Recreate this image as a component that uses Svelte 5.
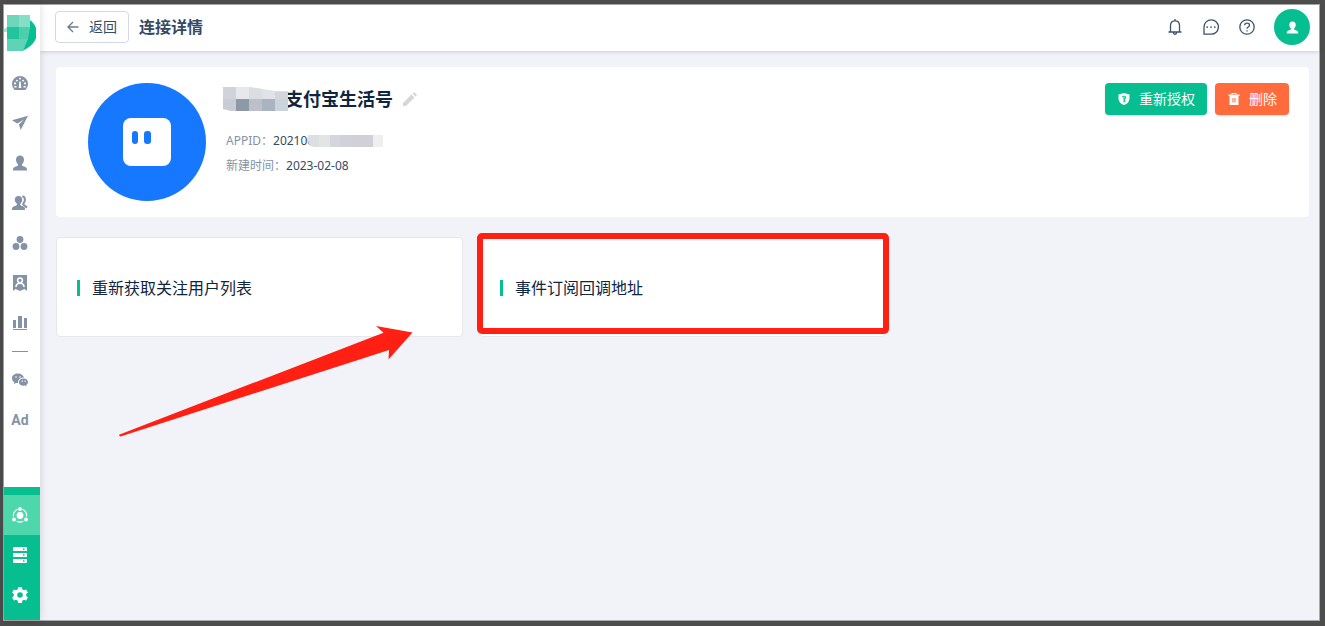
<script>
  const navItems = [
    { id: 'dashboard', label: '概览' },
    { id: 'send', label: '推送' },
    { id: 'user', label: '用户' },
    { id: 'group', label: '群组' },
    { id: 'nodes', label: '标签' },
    { id: 'badge', label: '名片' },
    { id: 'chart', label: '报表' }
  ];
  const channels = [{ id: 'wechat', label: '微信' }];
  const system = [
    { id: 'connect', label: '连接', active: true },
    { id: 'server', label: '数据' },
    { id: 'gear', label: '设置' }
  ];

  const nameMask = ['#d0d3db', '#e7e8ec', '#dadde2', '#dfe2e7', '#d3d7dc', '#c9ccd6', '#8e99a8', '#bcc0cb', '#a9b4c0', '#cbd3dc'];
  const idMask = ['#dcdfe1', '#e3e4e4', '#d3d6da', '#d0d1da', '#d1d0d6', '#d1d0d6', '#efeff0'];
</script>

{#snippet icon(id)}
  <svg class="icon" viewBox="0 0 16 16" aria-hidden="true">
    {#if id === 'dashboard'}
      <path fill-rule="evenodd" d="M2.2 14.5A8 8 0 1 1 13.8 14.5Q13.4 15 12.8 15H3.2Q2.6 15 2.2 14.500ZM7.300 6.500L6.700 13H9.300L8.700 6.500ZM2 9.300h2v-1.700h-2ZM12 9.300h2v-1.700h-2ZM3.700 5.800l1.300 1 1.100-1.400-1.300-1ZM11 6.800l1.300-1-1.100-1.400-1.300 1ZM7.200 4.500h1.600v-1.700H7.200ZM2.300 12.500h2.200v-1.400H2.300ZM11.500 12.500h2.200v-1.400h-2.200Z" />
    {:else if id === 'send'}
      <path d="M0 5.200 16 .7 8.700 15 6.900 9.600 12 4.600 5.300 8.600Z" />
    {:else if id === 'user'}
      <path d="M8 .5C10.500 .5 12 2.300 12 4.700 12 6.500 11.200 8.300 10 9.100V10.500C11 11.500 15 11.500 15 14.500V15.500H1V14.500C1 11.500 5 11.500 6 10.500V9.100C4.800 8.300 4 6.500 4 4.700 4 2.300 5.500 .5 8 .5Z" />
    {:else if id === 'group'}
      <path d="M6.500 1C9 1 10.200 2.700 10.200 4.800 10.200 6.500 9.400 8 8.300 8.800V10C9.300 11 13 11.200 13 14V15H0V14C0 11.200 4 11 5 10V8.800C3.800 8 2.800 6.500 2.800 4.800 2.800 2.700 4 1 6.500 1Z" />
      <path class="line" d="M10.400 1.300C13.600 2 13.600 6.700 11.300 8.600V9.600L15 12.600" />
    {:else if id === 'nodes'}
      <circle cx="8" cy="4.500" r="3.400" /><circle cx="4" cy="11.500" r="3.400" /><circle cx="12" cy="11.500" r="3.400" />
    {:else if id === 'badge'}
      <path d="M1 0H15V16L12.500 14 8 16 3.500 14 1 16Z" />
      <g class="cut"><circle cx="8" cy="5.300" r="2.400" /><path d="M4 12C4 7 12 7 12 12" /></g>
    {:else if id === 'chart'}
      <path d="M1 5h3v8H1ZM6 1h4v12H6ZM12 3h3v10h-3ZM1 14h14v1H1Z" />
    {:else if id === 'wechat'}
      <path d="M6 1.500C2.500 1.500 0 3.500 0 6.300 0 8 .9 9.300 2.300 10.200L1.800 12 4 10.900 6 11.100C5.800 7.800 8.300 5.600 12 5.600 11.400 3.200 9 1.500 6 1.500Z" />
      <path d="M11.500 6.500C8.800 6.500 6.900 8 6.900 10.200 6.900 12.300 8.900 13.700 11.500 13.700L12.900 13.500 14.600 14.300 14.200 12.900C15.300 12.200 16 11.300 16 10.200 16 8 14.100 6.500 11.500 6.500Z" />
      <g class="dot"><circle cx="4" cy="5" r=".8" /><circle cx="8" cy="5" r=".8" /><circle cx="10.200" cy="9.200" r=".7" /><circle cx="13.200" cy="9.200" r=".7" /></g>
    {:else if id === 'connect'}
      <circle cx="8" cy="8.500" r="3.400" />
      <path class="line thin" d="M5.500 2.200A7 7 0 0 0 1.500 9.500M10.500 2.200A7 7 0 0 1 14.500 9.500M4.700 14.200A7 7 0 0 0 11.300 14.200" />
      <circle cx="8" cy="2" r="1.900" /><circle cx="2" cy="12.500" r="1.900" /><circle cx="14" cy="12.500" r="1.900" />
    {:else if id === 'server'}
      <path fill-rule="evenodd" d="M2 0H14Q15 0 15 1V4H1V1Q1 0 2 0ZM11 1.500V3H12.500V1.500ZM1 6H15V10H1ZM11 7.300V8.700H12.500V7.300ZM1 12H15V15Q15 16 14 16H2Q1 16 1 15ZM11 13.300V14.700H12.500V13.300Z" />
    {:else if id === 'gear'}
      <path fill-rule="evenodd" d="M6.200 0H9.800L10.300 2.300 11.800 3.200 14.100 2.500 15.900 5.500 14.200 7.100V8.900L15.900 10.500 14.100 13.500 11.800 12.800 10.300 13.700 9.800 16H6.200L5.700 13.700 4.200 12.800 1.900 13.500 .1 10.500 1.800 8.900V7.100L.1 5.500 1.900 2.500 4.200 3.200 5.700 2.300ZM8 5.200A2.800 2.800 0 1 0 8 10.800 2.800 2.800 0 1 0 8 5.200Z" />
    {/if}
  </svg>
{/snippet}

<div class="frame">
  <aside class="sidebar">
    <a class="logo" href="#home" aria-label="首页">
      <svg viewBox="0 0 32 36" aria-hidden="true">
        <path fill="#06be8f" d="M20 2C37 8 38 28 18 36Z" />
        <path fill="#6dd7bb" d="M3 0H23V12H3Z" /><path fill="#83dfc6" d="M15 0H26V14H15Z" />
        <path fill="#22c49b" d="M3 12H15V24H3Z" /><path fill="#4dcfae" d="M15 12H26L24 24H15Z" />
        <path fill="#5fd3b5" d="M3 24H24L19 36H3Z" /><path fill="#a5e7d5" d="M0 14 3 12V17H0Z" />
      </svg>
    </a>
    <nav class="nav">
      {#each navItems as item}
        <a href="#{item.id}" aria-label={item.label}>{@render icon(item.id)}</a>
      {/each}
    </nav>
    <hr />
    <nav class="nav">
      {#each channels as item}
        <a href="#{item.id}" aria-label={item.label}>{@render icon(item.id)}</a>
      {/each}
      <a class="ad" href="#ad">Ad</a>
    </nav>
    <nav class="nav system">
      {#each system as item}
        <a href="#{item.id}" class:active={item.active} aria-label={item.label}>{@render icon(item.id)}</a>
      {/each}
    </nav>
  </aside>

  <div class="page">
    <header class="topbar">
      <button class="back" type="button">
        <svg viewBox="0 0 12 12" aria-hidden="true"><path d="M11.500 6H1M6 1 1 6 6 11" /></svg>
        返回
      </button>
      <h1>连接详情</h1>
      <div class="tools">
        <button type="button" aria-label="通知">
          <svg viewBox="0 0 16 16" aria-hidden="true"><path d="M8 0V1.500M3.500 12.500V6.500C3.500 3.500 5.300 1.800 8 1.800S12.500 3.500 12.500 6.500V12.500M1.500 13H14.500M6.300 13.500C6.500 15.800 9.500 15.800 9.700 13.500" /></svg>
        </button>
        <button type="button" aria-label="消息">
          <svg viewBox="0 0 16 16" aria-hidden="true"><path d="M1 15V8A7.200 7.200 0 1 1 8 15.200ZM4.200 7.300V9M8 7.300V9M11.800 7.300V9" /></svg>
        </button>
        <button type="button" aria-label="帮助">
          <svg viewBox="0 0 16 16" aria-hidden="true"><circle cx="8" cy="8" r="7.200" /><path d="M5.700 6.300C5.700 3.500 10.500 3.500 10.500 6.300 10.500 8 8 8 8 9.700M8 11.300V12.500" /></svg>
        </button>
        <button class="account" type="button" aria-label="账户">{@render icon('user')}</button>
      </div>
    </header>

    <main>
      <section class="profile">
        <svg class="avatar" viewBox="0 0 118 118" aria-hidden="true">
          <circle cx="59" cy="59" r="59" fill="#1677ff" />
          <rect x="35" y="35" width="48" height="48" rx="8" fill="#fff" />
          <rect x="44" y="48" width="6" height="13" rx="3" fill="#1677ff" />
          <rect x="56" y="48" width="7" height="13" rx="3" fill="#1677ff" />
        </svg>
        <div class="info">
          <div class="title">
            <span class="mask name-mask">
              {#each nameMask as color}<i style="background: {color}"></i>{/each}
            </span>
            <h2>支付宝生活号</h2>
            <button class="edit" type="button" aria-label="编辑">
              <svg viewBox="0 0 14 14" aria-hidden="true"><path d="M0 14V11L8.500 2.500 11.500 5.500 3 14ZM9.500 1.500 11 0 14 3 12.500 4.500Z" /></svg>
            </button>
          </div>
          <dl>
            <div><dt>APPID：</dt><dd>202100<span class="mask id-mask">{#each idMask as color}<i style="background: {color}"></i>{/each}</span></dd></div>
            <div><dt>新建时间：</dt><dd>2023-02-08</dd></div>
          </dl>
        </div>
        <div class="actions">
          <button class="primary" type="button">
            <svg viewBox="0 0 12 12" aria-hidden="true"><path fill-rule="evenodd" d="M6 0 11.500 1.500V5.500C11.500 8.500 9.500 10.800 6 12 2.500 10.800.5 8.500.5 5.500V1.500ZM4.300 3V4.500H5.500V9.500H6.700V8.500H7.700V7.500H6.700V6.300C9 5.700 8.300 2.500 6 2.700ZM5.700 3.700H6.700V5H5.700Z" /></svg>
            重新授权
          </button>
          <button class="danger" type="button">
            <svg viewBox="0 0 12 12" aria-hidden="true"><path fill-rule="evenodd" d="M3.500 0H8.500V1.500H11.500V3H.5V1.500H3.500ZM4.500 1V1.700H7.500V1ZM1.500 3H10.500V12H1.500Z" /><path class="bin" d="M4 5H8V9.500H4Z" /></svg>
            删除
          </button>
        </div>
      </section>

      <section class="cards">
        <a class="card" href="#followers"><span>重新获取关注用户列表</span></a>
        <a class="card marked" href="#callback"><span>事件订阅回调地址</span></a>
      </section>
    </main>
  </div>

  <svg class="pointer" viewBox="0 0 294 112" aria-hidden="true">
    <path d="M0 108.700 264.500 6.700 257 0 293.500 6.500 269.500 33.500 270 24 1.500 110.500Q.3 110.500 0 108.700Z" />
  </svg>
</div>

<style>
  :global(body) {
    margin: 0;
  }
  * {
    box-sizing: border-box;
  }
  .frame {
    position: relative;
    display: flex;
    min-height: 100vh;
    border: solid #4d4d4d;
    border-width: 4px 5px 5px 3px;
    padding: 1px;
    background: #a9aaab;
    color: #0f2540;
    font: 14px/20px "Noto Sans", "Noto Sans CJK SC", sans-serif;
  }
  button {
    display: flex;
    align-items: center;
    justify-content: center;
    margin: 0;
    padding: 0;
    border: 0;
    background: none;
    font: inherit;
    color: inherit;
    cursor: pointer;
  }
  a {
    color: inherit;
    text-decoration: none;
  }
  .icon {
    display: block;
    width: 16px;
    height: 16px;
    fill: currentColor;
  }
  .icon .line {
    fill: none;
    stroke: currentColor;
    stroke-width: 2;
  }
  .icon .thin {
    stroke-width: 1.2;
  }
  .icon .cut {
    fill: none;
    stroke: #fff;
    stroke-width: 1.5;
  }
  .icon .dot {
    fill: #fff;
  }

  .sidebar {
    position: relative;
    z-index: 1;
    display: flex;
    flex-direction: column;
    width: 36px;
    background: #fff;
    color: #8592a6;
    box-shadow: 0 0 8px rgba(0, 21, 41, 0.16);
  }
  .logo {
    height: 58px;
    padding-top: 10px;
  }
  .logo svg {
    display: block;
    width: 32px;
    height: 36px;
  }
  .nav a {
    display: flex;
    align-items: center;
    justify-content: center;
    width: 32px;
    height: 40px;
  }
  hr {
    width: 16px;
    height: 1px;
    margin: 8px 0 8px 8px;
    border: 0;
    background: #8592a6;
  }
  .nav .ad {
    font-family: Roboto, "Noto Sans", sans-serif;
    font-size: 14px;
    font-weight: 700;
  }
  .nav.system {
    margin-top: auto;
    padding: 8px 0 5px;
    background: #06be8f;
    color: #fff;
  }
  .system a {
    width: 36px;
    padding-right: 4px;
  }
  .system .active {
    background: #4ed7aa;
  }

  .page {
    flex: 1;
    min-width: 0;
    background: #f2f3f8;
  }
  .topbar {
    display: flex;
    align-items: center;
    height: 46px;
    padding: 0 9px 2px 15px;
    background: #fff;
    color: #344a66;
    box-shadow: 0 1px 4px rgba(0, 21, 41, 0.16);
  }
  .back {
    gap: 10px;
    width: 74px;
    height: 32px;
    border: 1px solid #d3d9e2;
    border-radius: 4px;
  }
  .back svg {
    width: 12px;
    height: 12px;
    fill: none;
    stroke: #6b7a90;
    stroke-width: 1.3;
  }
  h1 {
    margin: 0 0 0 10px;
    font-size: 16px;
    font-weight: 600;
  }
  .tools {
    display: flex;
    align-items: center;
    gap: 20px;
    margin-left: auto;
  }
  .tools svg {
    width: 16px;
    height: 16px;
    fill: none;
    stroke: #3d536e;
    stroke-width: 1.3;
  }
  .tools .account {
    width: 36px;
    height: 36px;
    margin-left: -1px;
    border-radius: 50%;
    background: #06be8f;
    color: #fff;
  }
  .account .icon {
    width: 13px;
    height: 13px;
    fill: #fff;
    stroke: none;
  }

  main {
    display: grid;
    gap: 20px;
    padding: 16px 10px 16px 16px;
  }
  .profile {
    display: flex;
    align-items: flex-start;
    min-height: 150px;
    padding: 16px 20px 16px 32px;
    border-radius: 4px;
    background: #fff;
  }
  .avatar {
    flex: none;
    width: 118px;
    height: 118px;
  }
  .info {
    margin-left: 17px;
  }
  .title {
    display: flex;
    align-items: center;
    height: 32px;
  }
  h2 {
    margin: 0 0 0 -3px;
    font-size: 18px;
    font-weight: 700;
  }
  .edit {
    margin-left: 10px;
  }
  .edit svg {
    width: 14px;
    height: 14px;
    fill: #d6d6d6;
  }
  .mask {
    display: grid;
    overflow: hidden;
  }
  .name-mask {
    grid-template: repeat(2, 12px) / repeat(5, 1fr);
    width: 65px;
    clip-path: polygon(0 0, 42% 0, 82% 18%, 100% 18%, 100% 100%, 12% 100%, 0 92%);
  }
  .id-mask {
    grid-template: 12px / repeat(7, 1fr);
    width: 75px;
    margin-left: -6px;
    border-radius: 0 0 0 6px;
  }
  dl {
    margin: 13px 0 0 3px;
    font-size: 12px;
  }
  dl div {
    display: flex;
    height: 25px;
    line-height: 25px;
  }
  dt {
    color: #8592a6;
  }
  dd {
    display: flex;
    align-items: center;
    margin: 0;
    color: #344a66;
  }
  .id-mask {
    position: relative;
  }
  .actions {
    display: flex;
    gap: 8px;
    margin-left: auto;
  }
  .actions button {
    gap: 9px;
    height: 32px;
    padding: 0 12px 0 13px;
    border-radius: 4px;
    color: #fff;
    box-shadow: 0 1px 2px rgba(0, 0, 0, 0.12);
  }
  .actions svg {
    width: 12px;
    height: 12px;
    fill: #fff;
  }
  .actions .bin {
    fill: #ffb49c;
  }
  .primary {
    background: #06be8f;
  }
  .danger {
    background: #ff6b3d;
  }

  .cards {
    display: grid;
    grid-template-columns: repeat(3, 1fr);
    gap: 16px;
  }
  .card {
    position: relative;
    display: flex;
    align-items: center;
    height: 100px;
    padding: 2px 20px 0;
    border: 1px solid #e6e8ec;
    border-radius: 4px;
    background: #fff;
    font-size: 16px;
  }
  .card::before {
    content: "";
    width: 3px;
    height: 16px;
    margin-right: 12px;
    background: #06be8f;
  }
  .marked::after {
    content: "";
    position: absolute;
    inset: -5px -4px 2px -3px;
    border: 6px solid #ff2013;
    border-radius: 5px;
  }
  .pointer {
    position: absolute;
    top: 322px;
    left: 116px;
    width: 294px;
    height: 112px;
    fill: #ff2013;
    pointer-events: none;
  }
</style>
